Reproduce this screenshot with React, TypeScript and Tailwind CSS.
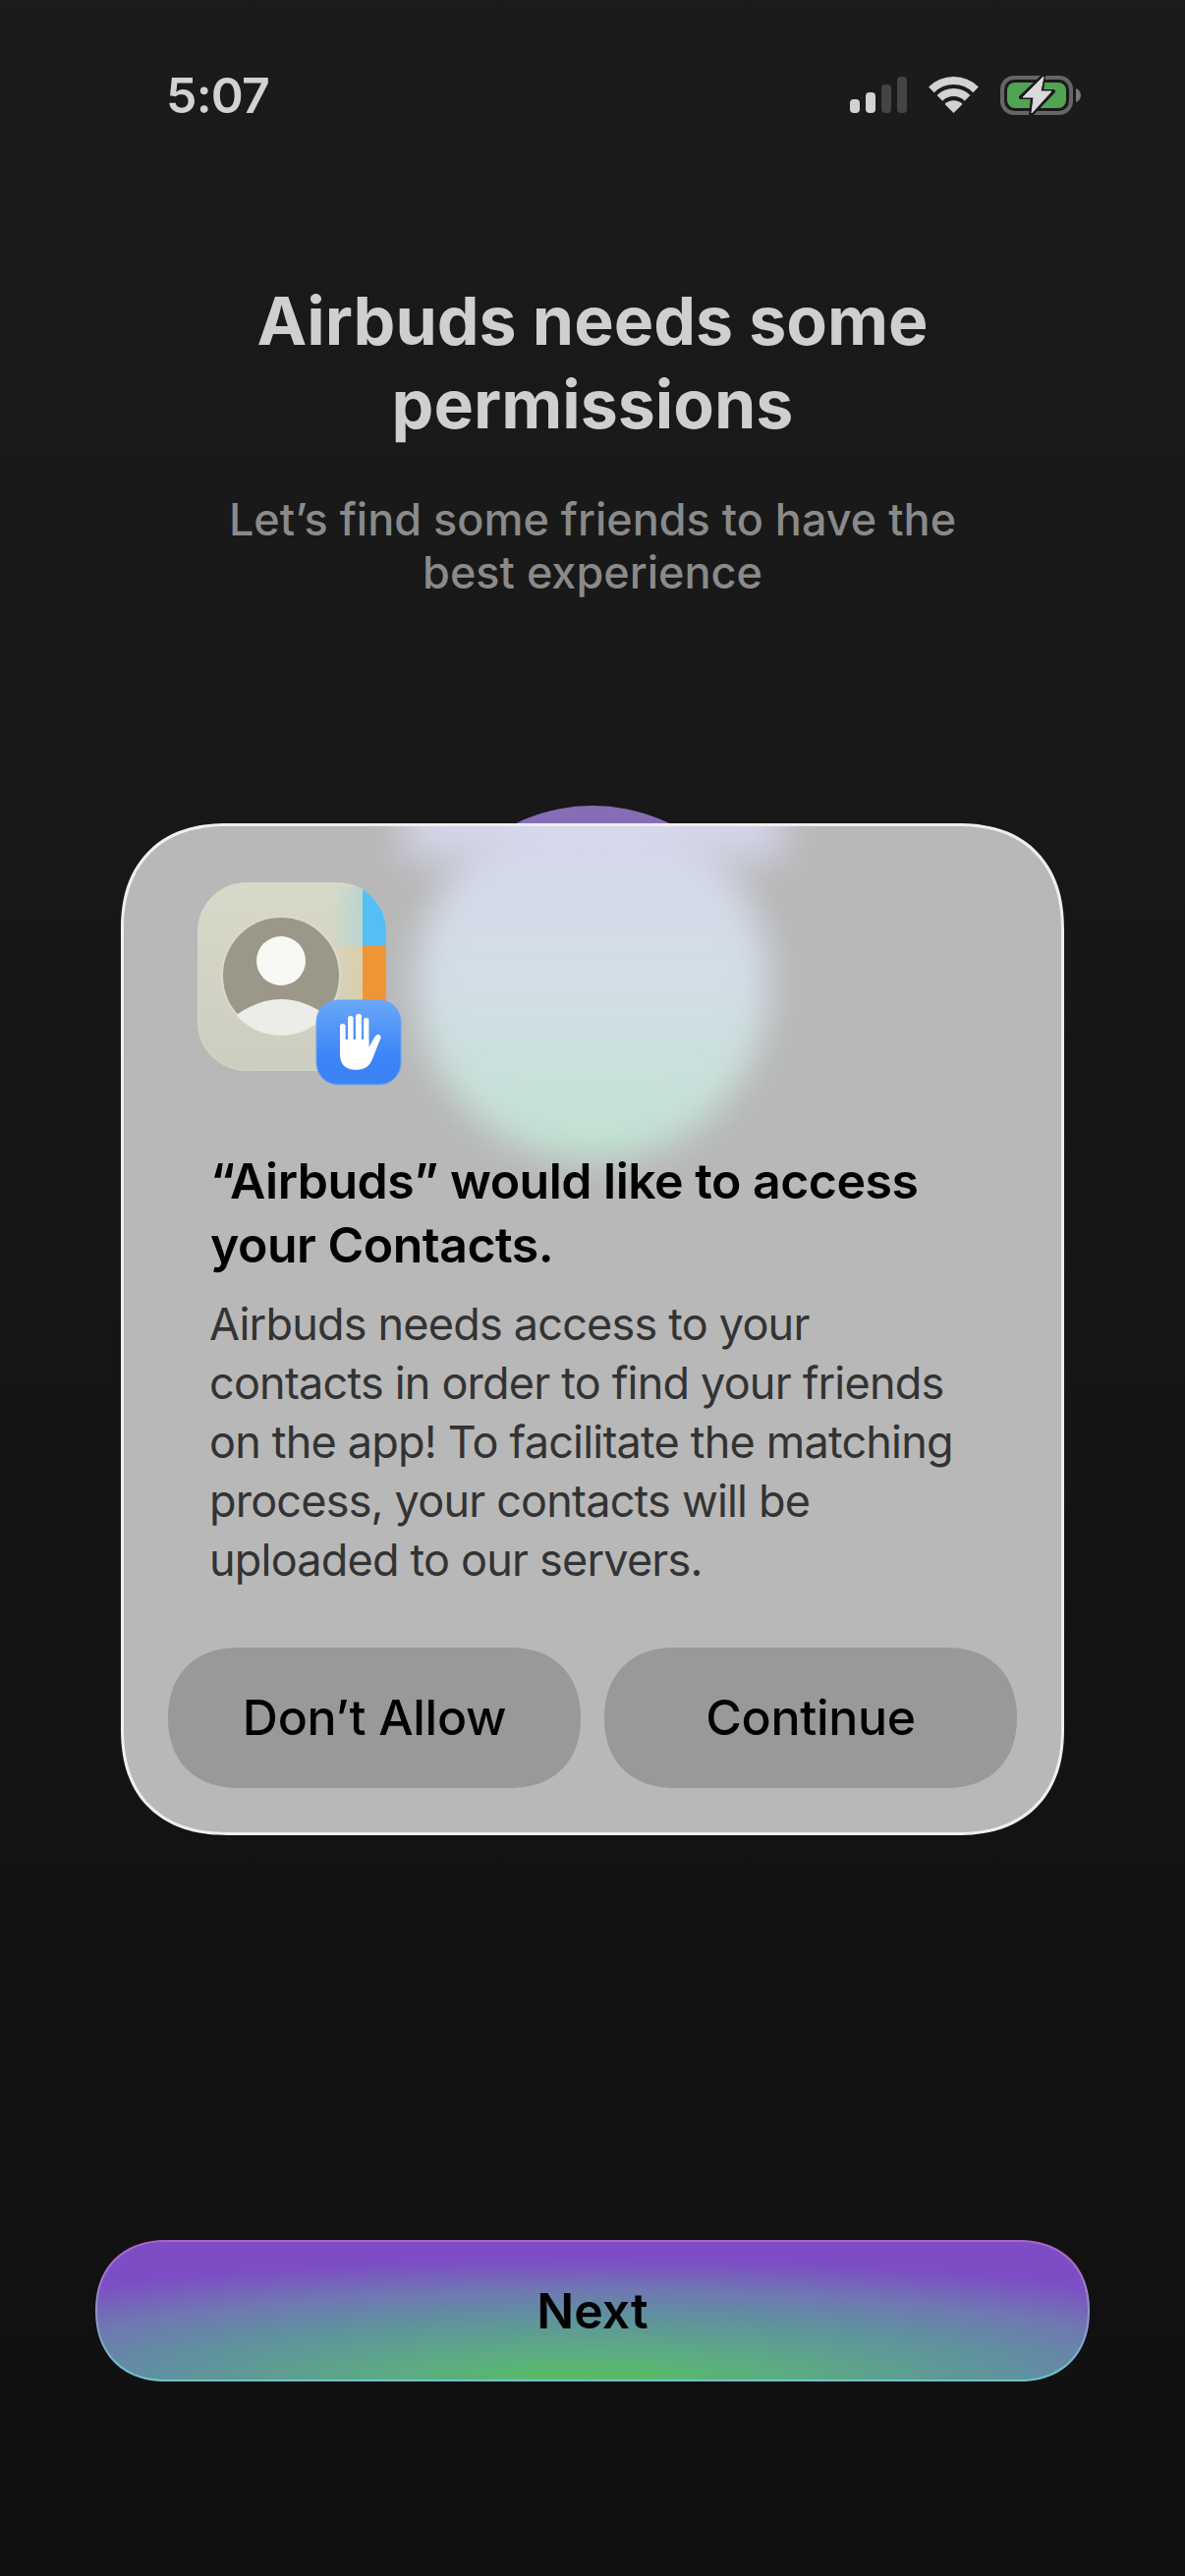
const StatusIcons = () => (
  <div className="flex items-center gap-[22px]">
    <svg width="58" height="38" viewBox="0 0 58 38">
      <rect x="0" y="23" width="10" height="14" rx="4" fill="#d2d2d2" />
      <rect x="16" y="16" width="10" height="21" rx="4" fill="#d2d2d2" />
      <rect x="32" y="8" width="10" height="29" rx="4" fill="#444444" />
      <rect x="48" y="0" width="10" height="37" rx="4" fill="#444444" />
    </svg>
    <svg width="51" height="38" viewBox="0 0 51 38" fill="none">
      <path d="M2.9 13.4 A32 32 0 0 1 48.1 13.4" stroke="#d2d2d2" strokeWidth="8" />
      <path d="M11.4 21.9 A20 20 0 0 1 39.6 21.9" stroke="#d2d2d2" strokeWidth="8" />
      <path d="M25.5 37 L16.5 28 A12.7 12.7 0 0 1 34.5 28 Z" fill="#d2d2d2" />
    </svg>
    <svg width="82" height="40" viewBox="0 0 82 40" fill="none">
      <rect x="2" y="2" width="70" height="36" rx="12" stroke="#666666" strokeWidth="4" />
      <rect x="7" y="7" width="60" height="26" rx="8" fill="#52a352" />
      <path d="M77 13 C80 14 82 17 82 20 C82 23 80 26 77 27 Z" fill="#777777" />
      <path d="M44 0 L21 22 H33 L31 40 L54 16 H42 Z" fill="#1a1a1a" stroke="#1a1a1a" strokeWidth="4" strokeLinejoin="round" />
      <path d="M44 1 L23 22 H34 L32 38 L52 16 H41 Z" fill="#dadada" stroke="#dadada" strokeWidth="1" strokeLinejoin="round" />
    </svg>
  </div>
);

const ContactsIcon = () => (
  <svg width="210" height="210" viewBox="0 0 210 210" fill="none" className="block">
    <defs>
      <linearGradient id="card" x1="0" y1="0" x2="0" y2="1">
        <stop offset="0" stopColor="#d9d9c9" />
        <stop offset="1" stopColor="#cdcdc0" />
      </linearGradient>
      <linearGradient id="badge" x1="0" y1="0" x2="0" y2="1">
        <stop offset="0" stopColor="#69a7f9" />
        <stop offset="0.7" stopColor="#3b83f6" />
      </linearGradient>
      <linearGradient id="tintBlue" x1="0" y1="0" x2="1" y2="0">
        <stop offset="0" stopColor="#b8d6d0" stopOpacity="0" />
        <stop offset="1" stopColor="#b8d6d0" />
      </linearGradient>
      <linearGradient id="tintOrange" x1="0" y1="0" x2="1" y2="0">
        <stop offset="0" stopColor="#dccfa8" stopOpacity="0" />
        <stop offset="1" stopColor="#dccfa8" />
      </linearGradient>
      <clipPath id="cardClip">
        <rect x="0" y="0" width="192" height="192" rx="50" />
      </clipPath>
    </defs>
    <rect x="1" y="1" width="190" height="190" rx="49" stroke="#e6e6d8" strokeWidth="2" opacity="0.6" />
    <g clipPath="url(#cardClip)">
      <rect x="1" y="1" width="190" height="190" rx="49" fill="url(#card)" />
      <rect x="168" y="0" width="24" height="64" fill="#55bef5" />
      <rect x="168" y="64" width="24" height="60" fill="#f09535" />
      <rect x="135" y="5" width="33" height="60" fill="url(#tintBlue)" />
      <rect x="135" y="65" width="33" height="58" fill="url(#tintOrange)" />
    </g>
    <circle cx="85" cy="95" r="60" fill="#9c9889" stroke="#dad9cc" strokeWidth="2" />
    <circle cx="85" cy="80" r="25" fill="#f8f8f5" />
    <path d="M39.5 135 Q85 103 130.5 135 A60 60 0 0 1 39.5 135 Z" fill="#ecece8" />
    <rect x="121" y="120" width="86" height="86" rx="22" fill="url(#badge)" stroke="#6aa5f5" />
    <g fill="#ffffff">
      <rect x="145" y="144" width="5.6" height="30" rx="2.8" />
      <rect x="153" y="136" width="5.6" height="34" rx="2.8" />
      <rect x="161" y="134" width="6" height="34" rx="3" />
      <rect x="169" y="138" width="5.4" height="34" rx="2.7" />
      <path d="M145 160 H174.4 V168 L180 158 Q183 153 186 156 Q187.5 158 185 162 L178 180 Q174 191 162 191 Q145 191 145 175 Z" />
    </g>
  </svg>
);

const DialogButton = ({ label }: { label: string }) => (
  <button className="flex-1 h-[143px] rounded-[72px] [corner-shape:superellipse(1.15)] bg-[#999999] text-black text-[50px] font-medium tracking-[-0.3px]">
    {label}
  </button>
);

export default function App() {
  return (
    <div className="w-[1206px] h-[2622px] overflow-hidden flex flex-col bg-gradient-to-b from-[#1b1b1b] to-[#101010] font-[Inter,sans-serif]">
      <div className="mt-[67px] h-[60px] flex items-center justify-between pl-[169px] pr-[106px]">
        <span className="text-[50px] font-semibold leading-[60px] tracking-[-0.8px] text-[#d2d2d2]">5:07</span>
        <StatusIcons />
      </div>

      <h1 className="mt-[157px] text-center text-[68px] leading-[85px] font-bold text-[#cfcfcf]">
        Airbuds needs some
        <br />
        permissions
      </h1>
      <p className="mt-[48px] text-center text-[45px] leading-[54px] font-medium text-[#8a8a8a]">
        Let’s find some friends to have the
        <br />
        best experience
      </p>

      <div className="relative mt-[228px] mx-[123px] h-[1030px]">
        <div className="absolute top-[-18px] left-[302px] w-[356px] h-[356px] rounded-full bg-[#866db5]" />
        <div className="relative h-full overflow-hidden rounded-[108px] [corner-shape:superellipse(1.2)] border-[3px] border-[#eeeeee] bg-[#b8b8b8]">
          <div className="absolute top-[-50px] left-[285px] w-[385px] h-[85px] bg-[#d5d6ea] blur-[20px]" />
          <div className="absolute top-[-20px] left-[297px] w-[360px] h-[360px] rounded-full bg-gradient-to-b from-[#d6d6ec] via-[#d2dee6] to-[#c0e3d1] blur-[18px]" />

          <div className="relative flex h-full flex-col">
            <div className="ml-[75px] mt-[57px]">
              <ContactsIcon />
            </div>
            <h2 className="ml-[88px] mt-[62px] text-[50px] leading-[65px] font-semibold tracking-[-0.5px] text-black">
              “Airbuds” would like to access
              <br />
              your Contacts.
            </h2>
            <p className="ml-[87px] mt-[18px] text-[45px] leading-[60px] tracking-[-0.8px] text-[#333333]">
              Airbuds needs access to your
              <br />
              contacts in order to find your friends
              <br />
              on the app! To facilitate the matching
              <br />
              process, your contacts will be
              <br />
              uploaded to our servers.
            </p>
            <div className="mt-auto mb-[45px] mx-[45px] flex gap-[24px]">
              <DialogButton label="Don’t Allow" />
              <DialogButton label="Continue" />
            </div>
          </div>
        </div>
      </div>

      <div className="mt-[412px] mx-[97px]">
        <button className="w-full h-[144px] rounded-[72px] [corner-shape:superellipse(1.15)] border-2 border-transparent text-black text-[50px] font-semibold [background-origin:border-box] [background-clip:padding-box,border-box] bg-[radial-gradient(ellipse_813px_124px_at_50%_100%,#58b968_0%,#58b968_8%,#5cae80_22%,#6090a0_55%,#6f78b2_75%,#7d4dc5_100%),linear-gradient(#b060c8,#6cc4cc)]">
          Next
        </button>
      </div>
    </div>
  );
}
